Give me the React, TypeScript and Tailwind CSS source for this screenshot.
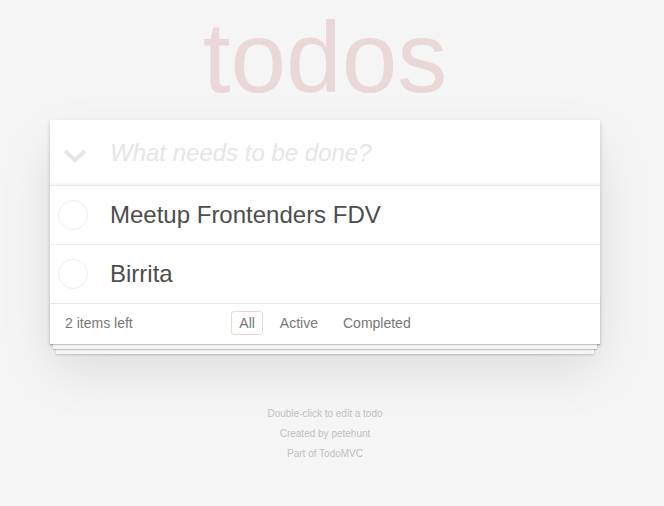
import { useState } from 'react';

type Todo = { id: number; title: string; done: boolean };

const initialTodos: Todo[] = [
  { id: 1, title: 'Meetup Frontenders FDV', done: false },
  { id: 2, title: 'Birrita', done: false },
];

const filters = ['All', 'Active', 'Completed'];

const App: React.FC = () => {
  const [todos] = useState<Todo[]>(initialTodos);
  const [filter, setFilter] = useState('All');
  const left = todos.filter((t) => !t.done).length;

  return (
    <div className="min-h-screen bg-[#f5f5f5] font-['Liberation_Sans',Arial,sans-serif] text-[14px] text-[#4d4d4d]">
      <div className="w-[550px] ml-[50px]">
        <header className="h-[120px] pt-[7px]">
          <h1 className="text-center text-[100px] leading-none font-normal text-[rgba(175,47,47,0.15)]">todos</h1>
        </header>

        <section className="bg-white shadow-[0_2px_4px_0_rgba(0,0,0,0.2),0_25px_50px_0_rgba(0,0,0,0.1)]">
          <div className="flex items-center h-[65px] bg-[rgba(0,0,0,0.003)] shadow-[inset_0_-2px_1px_rgba(0,0,0,0.03)]">
            <div className="w-[60px] pl-[13px] mt-[6px]">
              <svg width="24" height="14" viewBox="0 0 24 14">
                <polyline points="2,2 12,11 22,2" fill="none" stroke="#e6e6e6" strokeWidth="4" />
              </svg>
            </div>
            <input
              className="flex-1 pr-4 bg-transparent outline-none text-[24px] leading-[1.4] text-[#4d4d4d] placeholder:italic placeholder:text-[#e6e6e6]"
              placeholder="What needs to be done?"
            />
          </div>

          <ul className="border-t border-[#e6e6e6]">
            {todos.map((todo, i) => (
              <li
                key={todo.id}
                className={`flex items-center pl-[8px] ${i < todos.length - 1 ? 'border-b border-[#ededed]' : ''}`}
              >
                <span className="w-[30px] h-[30px] rounded-full border border-[#ededed] shrink-0" />
                <label className="ml-[22px] py-[15px] text-[24px] leading-[28px] text-[#4d4d4d]">{todo.title}</label>
              </li>
            ))}
          </ul>

          <footer className="relative grid grid-cols-[1fr_auto_1fr] items-center h-[41px] pb-[3px] px-[15px] border-t border-[#e6e6e6] text-[#777] before:content-[''] before:absolute before:inset-x-0 before:bottom-0 before:h-[50px] before:pointer-events-none before:shadow-[0_1px_1px_rgba(0,0,0,0.2),0_8px_0_-3px_#f6f6f6,0_9px_1px_-3px_rgba(0,0,0,0.2),0_16px_0_-6px_#f6f6f6,0_17px_2px_-6px_rgba(0,0,0,0.2)]">
            <span className="leading-[20px]">{left} items left</span>
            <ul className="flex gap-[9px]">
              {filters.map((f) => (
                <li key={f}>
                  <a
                    href="#"
                    onClick={() => setFilter(f)}
                    className={`inline-block px-[7px] py-[3px] leading-[16px] rounded-[3px] border ${
                      filter === f ? 'border-[rgba(175,47,47,0.2)]' : 'border-transparent'
                    }`}
                  >
                    {f}
                  </a>
                </li>
              ))}
            </ul>
            <span />
          </footer>
        </section>

        <footer className="mt-[65px] text-center text-[10px] leading-none text-[#bfbfbf] flex flex-col gap-[10px]">
          <p>Double-click to edit a todo</p>
          <p>Created by petehunt</p>
          <p>Part of TodoMVC</p>
        </footer>
      </div>
    </div>
  );
};

export default App;
